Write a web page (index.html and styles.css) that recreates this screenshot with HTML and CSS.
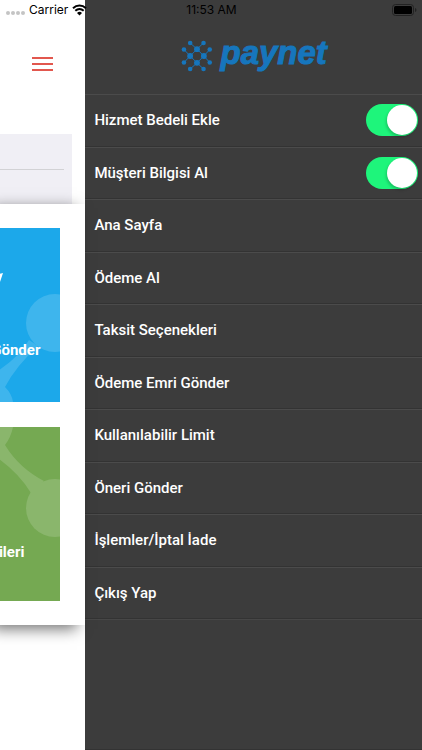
FILE: index.html
```html
<!DOCTYPE html>
<html lang="tr">
<head>
<meta charset="utf-8">
<meta name="viewport" content="width=device-width, initial-scale=1">
<title>Paynet</title>
<link rel="stylesheet" href="styles.css">
</head>
<body>
<div class="status">
  <div class="carrier">
    <span class="dots"><i></i><i></i><i></i><i></i></span>
    <span>Carrier</span>
    <svg class="wifi" viewBox="0 0 15 12" aria-hidden="true">
      <path d="M1 4.3C4.8.7 10.2.7 14 4.3M3.3 6.8C5.8 4.5 9.2 4.5 11.7 6.8" fill="none" stroke="#000" stroke-width="2"/>
      <path d="M5 8.9Q7.500 6.800 10 8.900L7.500 11.500Z"/>
    </svg>
  </div>
  <time>11:53 AM</time>
  <svg class="battery" viewBox="0 0 25 12" aria-hidden="true">
    <rect x=".5" y=".5" width="21" height="11" rx="3" fill="none" stroke="#222"/>
    <rect x="2" y="2" width="18" height="8" rx="1.500"/>
    <path d="M23 4Q24.500 4.500 24.500 6T23 8Z" fill="#222"/>
  </svg>
</div>
<div class="app">
  <main class="page">
    <header class="page-head">
      <button class="burger" aria-label="Menü"><i></i><i></i><i></i></button>
    </header>
    <div class="panel"><hr></div>
    <section class="card">
      <a class="tile blue" href="#">
        <svg class="net" viewBox="0 0 100 174" aria-hidden="true">
          <path d="M69 112Q60 128 38 143L0 148V174H53Q52 166 45 159Q56 138 78 118Z"/>
          <circle cx="95" cy="95" r="29"/>
        </svg>
        <svg class="arrow" viewBox="0 0 12 12" aria-hidden="true"><path d="M0 3L12 0L8 12Z"/></svg>
        <span>Gönder</span>
      </a>
      <a class="tile green" href="#">
        <svg class="net" viewBox="0 0 100 174" aria-hidden="true">
          <path d="M0 0H53Q51 10 45 18Q59 41 84 54L71 66Q58 45 36 30L0 36Z"/>
          <circle cx="95" cy="81" r="29"/>
        </svg>
        <span>Bilgileri</span>
      </a>
    </section>
  </main>
  <nav class="drawer">
    <div class="logo">
      <svg viewBox="64 120 96 98" aria-hidden="true">
        <path d="M91 129L112 148L132 129M72 149L91 169L72 189M151 149L133 169L151 189M91 209L112 190L132 209M112 148L91 169L112 190L133 169Z" fill="none" stroke="#1676bd" stroke-width="3"/>
        <g fill="#1676bd">
          <circle cx="112" cy="148" r="9"/><circle cx="91" cy="169" r="9"/><circle cx="133" cy="169" r="9"/><circle cx="112" cy="190" r="9"/>
          <circle cx="91" cy="129" r="7"/><circle cx="132" cy="129" r="7"/><circle cx="72" cy="149" r="7"/><circle cx="151" cy="149" r="7"/>
          <circle cx="72" cy="189" r="7"/><circle cx="151" cy="189" r="7"/><circle cx="91" cy="209" r="7"/><circle cx="132" cy="209" r="7"/>
        </g>
      </svg>
      <span>paynet</span>
    </div>
    <ul class="menu">
      <li><label for="fee">Hizmet Bedeli Ekle</label><input class="switch" id="fee" type="checkbox" checked></li>
      <li><label for="customer">Müşteri Bilgisi Al</label><input class="switch" id="customer" type="checkbox" checked></li>
      <li><a href="#">Ana Sayfa</a></li>
      <li><a href="#">Ödeme Al</a></li>
      <li><a href="#">Taksit Seçenekleri</a></li>
      <li><a href="#">Ödeme Emri Gönder</a></li>
      <li><a href="#">Kullanılabilir Limit</a></li>
      <li><a href="#">Öneri Gönder</a></li>
      <li><a href="#">İşlemler/İptal İade</a></li>
      <li><a href="#">Çıkış Yap</a></li>
    </ul>
  </nav>
</div>
</body>
</html>
```
FILE: styles.css
```css
* { box-sizing: border-box; }
body { margin: 0; font-family: Roboto, "Liberation Sans", sans-serif; background: #3c3c3c; }
a { color: inherit; text-decoration: none; }

.status {
  position: absolute; top: 0; left: 0; right: 0; z-index: 2;
  height: 20px; padding: 0 5px 0 6px;
  display: grid; grid-template-columns: 1fr auto 1fr; align-items: center;
  font: 400 12px/20px Inter, sans-serif; color: #000;
}
.carrier { display: flex; align-items: center; gap: 4px; }
.dots { display: flex; gap: 1px; padding-top: 6px; }
.dots i { width: 4px; height: 4px; border-radius: 50%; background: #c4c4c4; }
.wifi { width: 15px; height: 12px; }
.battery { width: 25px; height: 12px; justify-self: end; }

.app { display: flex; min-height: 100vh; }
.page { flex: 0 0 calc(20% + 1px); background: #fff; position: relative; z-index: 1; }
.page-head { height: 134px; padding: 53px 32px 0 0; display: flex; justify-content: flex-end; align-items: flex-start; }
.burger {
  width: 21px; height: 21px; padding: 0; border: 0; background: none;
  display: flex; flex-direction: column; justify-content: center; gap: 4px;
}
.burger i { height: 2px; background: #e2574e; }
.panel { height: 70px; margin-right: 13px; padding: 35px 8px 0 0; background: #f0eff5; }
.panel hr { margin: 0; border: 0; height: 1px; background: #d2d2d5; }
.card {
  padding: 24px 25px 24px 0; display: grid; gap: 25px; background: #fff;
  box-shadow: -8px 4px 14px rgba(0, 0, 0, .55);
}
.tile {
  position: relative; overflow: hidden; height: 174px; padding: 112px 20px 0 0;
  display: flex; justify-content: flex-end; align-items: flex-start;
  font-size: 15px; line-height: 20px; font-weight: 700; color: #fff;
}
.tile span { position: relative; }
.blue { background: #1ca8ea; }
.green { background: #75a952; padding: 115px 36px 0 0; }
.net { position: absolute; right: 0; top: 0; width: 100px; height: 174px; fill: #fff; opacity: .15; }
.arrow { position: absolute; right: 57px; top: 45px; width: 12px; height: 12px; fill: #fff; }

.drawer { flex: 1; min-width: 0; background: #3c3c3c; border-bottom: 1px solid #333; }
.logo {
  height: 94px; padding-top: 18px; display: flex; align-items: center; justify-content: center; gap: 8px;
  font: italic 700 33px/40px "Liberation Sans", sans-serif; color: #1676bd;
  -webkit-text-stroke: 1px #1676bd;
}
.logo svg { width: 32px; height: 32px; }
.logo span { padding-bottom: 6px; }
.menu {
  height: 526px; margin: 0; padding: 0; list-style: none;
  display: grid; grid-template-rows: repeat(10, 1fr);
  border-bottom: 1px solid #474747;
}
.menu li {
  display: flex; align-items: center; justify-content: space-between;
  padding: 0 4px 0 9px;
  border-top: 1px solid #4b4b4b; border-bottom: 1px solid #333;
  font-size: 15px; line-height: 20px; font-weight: 500; color: #fff;
}
.menu a { flex: 1; }
.switch {
  appearance: none; margin: 0; width: 52px; height: 32px; padding: 1px; border-radius: 16px;
  background: #1ef57b; display: flex; justify-content: flex-end;
}
.switch::before {
  content: ""; width: 30px; height: 30px; border-radius: 50%; background: #fff;
  box-shadow: -1px 2px 3px rgba(0, 0, 0, .2);
}
.switch:not(:checked) { background: #777; justify-content: flex-start; }
```
